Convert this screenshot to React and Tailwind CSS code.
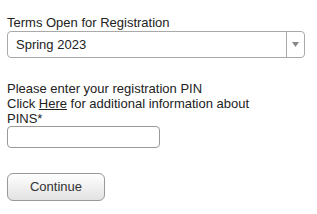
import React from "react";

export default function App() {
  return (
    <div
      className="w-[317px] h-[214px] bg-white text-[#222] pl-[7px] pt-[15px]"
      style={{ fontFamily: '"Liberation Sans", Arial, sans-serif' }}
    >
      {/* Term select */}
      <div className="text-[13px] leading-[15px]">Terms Open for Registration</div>
      <div className="mt-px flex h-[27px] w-[298px] items-stretch rounded-[4px] border border-[#aaa] bg-white">
        <div className="flex flex-1 items-center pl-[8px] text-[13px]">Spring 2023</div>
        <div className="flex w-[18px] items-center justify-center border-l border-[#aaa]">
          <svg width="7" height="5" viewBox="0 0 7 5">
            <path d="M0 0 H7 L3.5 5 Z" fill="#888" />
          </svg>
        </div>
      </div>

      {/* PIN entry */}
      <div className="mt-[23px] text-[13px] leading-[15px]">
        <div>Please enter your registration PIN</div>
        <div>
          Click <a className="underline">Here</a> for additional information about
        </div>
        <div>PINS*</div>
      </div>
      <input
        type="text"
        className="block h-[22px] w-[153px] rounded-[4px] border border-[#999] bg-white outline-none"
      />

      {/* Submit */}
      <button className="mt-[25px] block h-[28px] w-[98px] rounded-[6px] border border-[#999] bg-gradient-to-b from-white to-[#e2e2e2] text-[13px] text-[#333]">
        Continue
      </button>
    </div>
  );
}
